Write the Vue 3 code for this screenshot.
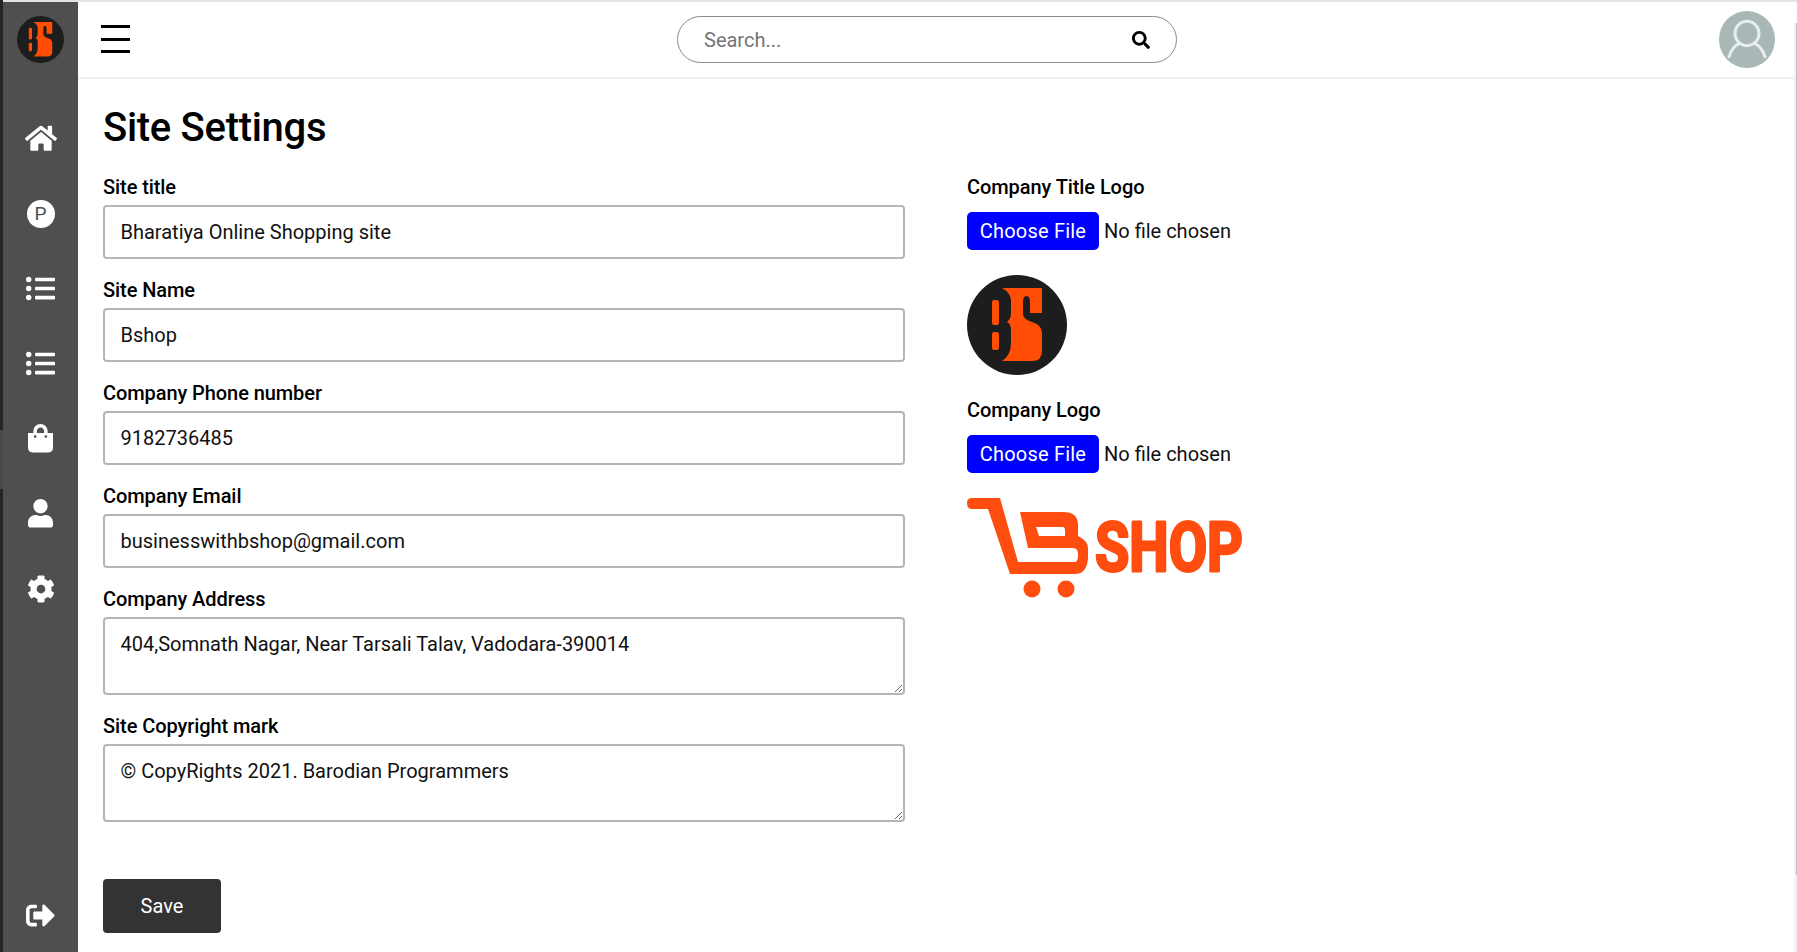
<script setup>
const navIcons = [
  { vb: '0 0 576 512', w: 32, d: 'M280.37 148.26L96 300.11V464a16 16 0 0 0 16 16l112.06-.29a16 16 0 0 0 15.92-16V368a16 16 0 0 1 16-16h64a16 16 0 0 1 16 16v95.64a16 16 0 0 0 16 16.05L464 480a16 16 0 0 0 16-16V300L295.67 148.26a12.19 12.19 0 0 0-15.3 0zM571.6 251.47L488 182.56V44.05a12 12 0 0 0-12-12h-56a12 12 0 0 0-12 12v72.61L318.47 43a48 48 0 0 0-61 0L4.34 251.47a12 12 0 0 0-1.6 16.9l25.5 31A12 12 0 0 0 45.15 301l235.22-193.74a12.19 12.19 0 0 1 15.3 0L530.9 301a12 12 0 0 0 16.9-1.6l25.5-31a12 12 0 0 0-1.7-16.93z' },
  { badge: 'P' },
  { vb: '0 0 512 512', w: 29, d: 'M48 48a48 48 0 1 0 48 48 48 48 0 0 0-48-48zm0 160a48 48 0 1 0 48 48 48 48 0 0 0-48-48zm0 160a48 48 0 1 0 48 48 48 48 0 0 0-48-48zm448 16H176a16 16 0 0 0-16 16v32a16 16 0 0 0 16 16h320a16 16 0 0 0 16-16v-32a16 16 0 0 0-16-16zm0-320H176a16 16 0 0 0-16 16v32a16 16 0 0 0 16 16h320a16 16 0 0 0 16-16V80a16 16 0 0 0-16-16zm0 160H176a16 16 0 0 0-16 16v32a16 16 0 0 0 16 16h320a16 16 0 0 0 16-16v-32a16 16 0 0 0-16-16z' },
  { vb: '0 0 512 512', w: 29, d: 'M48 48a48 48 0 1 0 48 48 48 48 0 0 0-48-48zm0 160a48 48 0 1 0 48 48 48 48 0 0 0-48-48zm0 160a48 48 0 1 0 48 48 48 48 0 0 0-48-48zm448 16H176a16 16 0 0 0-16 16v32a16 16 0 0 0 16 16h320a16 16 0 0 0 16-16v-32a16 16 0 0 0-16-16zm0-320H176a16 16 0 0 0-16 16v32a16 16 0 0 0 16 16h320a16 16 0 0 0 16-16V80a16 16 0 0 0-16-16zm0 160H176a16 16 0 0 0-16 16v32a16 16 0 0 0 16 16h320a16 16 0 0 0 16-16v-32a16 16 0 0 0-16-16z' },
  { vb: '0 0 448 512', w: 25, d: 'M352 160v-32C352 57.42 294.579 0 224 0 153.42 0 96 57.42 96 128v32H0v272c0 44.183 35.817 80 80 80h288c44.183 0 80-35.817 80-80V160h-96zm-192-32c0-35.29 28.71-64 64-64s64 28.71 64 64v32H160v-32zm160 120c-13.255 0-24-10.745-24-24s10.745-24 24-24 24 10.745 24 24-10.745 24-24 24zm-192 0c-13.255 0-24-10.745-24-24s10.745-24 24-24 24 10.745 24 24-10.745 24-24 24z' },
  { vb: '0 0 448 512', w: 25, d: 'M224 256c70.7 0 128-57.3 128-128S294.7 0 224 0 96 57.3 96 128s57.3 128 128 128zm89.6 32h-16.7c-22.2 10.2-46.9 16-72.9 16s-50.6-5.8-72.9-16h-16.7C60.2 288 0 348.2 0 422.4V464c0 26.5 21.5 48 48 48h352c26.5 0 48-21.5 48-48v-41.6c0-74.2-60.2-134.4-134.4-134.4z' },
  { vb: '0 0 512 512', w: 28, d: 'M487.4 315.7l-42.6-24.6c4.3-23.2 4.3-47 0-70.2l42.6-24.6c4.9-2.8 7.1-8.6 5.5-14-11.1-35.6-30-67.8-54.7-94.6-3.8-4.1-10-5.1-14.8-2.3L380.8 110c-17.9-15.4-38.5-27.3-60.8-35.1V25.8c0-5.6-3.9-10.5-9.4-11.7-36.7-8.2-74.3-7.8-109.2 0-5.5 1.2-9.4 6.1-9.4 11.7V75c-22.2 7.9-42.8 19.8-60.8 35.1L88.7 85.5c-4.9-2.8-11-1.9-14.8 2.3-24.7 26.7-43.6 58.9-54.7 94.6-1.7 5.4.6 11.2 5.5 14L67.3 221c-4.3 23.2-4.3 47 0 70.2l-42.6 24.6c-4.9 2.8-7.1 8.6-5.5 14 11.1 35.6 30 67.8 54.7 94.6 3.8 4.1 10 5.1 14.8 2.3l42.6-24.6c17.9 15.4 38.5 27.3 60.8 35.1v49.2c0 5.6 3.9 10.5 9.4 11.7 36.7 8.2 74.3 7.8 109.2 0 5.5-1.2 9.4-6.1 9.4-11.7v-49.2c22.2-7.9 42.8-19.8 60.8-35.1l42.6 24.6c4.9 2.8 11 1.9 14.8-2.3 24.7-26.7 43.6-58.9 54.7-94.6 1.5-5.5-.7-11.3-5.6-14.1zM256 336c-44.1 0-80-35.9-80-80s35.9-80 80-80 80 35.9 80 80-35.9 80-80 80z' }
]
const logout = 'M497 273L329 441c-15 15-41 4.5-41-17v-96H152c-13.3 0-24-10.7-24-24v-96c0-13.3 10.7-24 24-24h136V88c0-21.4 25.9-32 41-17l168 168c9.3 9.4 9.3 24.6 0 34zM192 436v-40c0-6.6-5.4-12-12-12H96c-17.7 0-32-14.3-32-32V160c0-17.7 14.3-32 32-32h84c6.6 0 12-5.4 12-12V76c0-6.6-5.4-12-12-12H96c-53 0-96 43-96 96v192c0 53 43 96 96 96h84c6.6 0 12-5.4 12-12z'
const search = 'M505 442.7L405.3 343c-4.5-4.5-10.6-7-17-7H372c27.6-35.3 44-79.7 44-128C416 93.1 322.9 0 208 0S0 93.1 0 208s93.1 208 208 208c48.3 0 92.7-16.4 128-44v16.3c0 6.4 2.5 12.5 7 17l99.7 99.7c9.4 9.4 24.6 9.4 33.9 0l28.3-28.3c9.4-9.4 9.4-24.6.1-34zM208 336c-70.7 0-128-57.2-128-128 0-70.7 57.2-128 128-128 70.7 0 128 57.2 128 128 0 70.7-57.2 128-128 128z'
const bsMark = 'M27 25h3q2 0 2 3v19q0 3-2 3h-3q-2 0-2-3V28q0-3 2-3zM27 57h3q2 0 2 3v12q0 3-2 3h-3q-2 0-2-3V60q0-3 2-3zM35 13H75V38H63V27Q63 21 59.500 21T56 27V39Q56 44 65 47Q75 50 75 58V76Q75 86 65 86H35Q44 80 44 68V55Q44 49 40 47Q44 44 44 38V26Q44 18 35 13Z'
const fields = [
  { label: 'Site title', value: 'Bharatiya Online Shopping site' },
  { label: 'Site Name', value: 'Bshop' },
  { label: 'Company Phone number', value: '9182736485' },
  { label: 'Company Email', value: 'businesswithbshop@gmail.com' }
]
const areas = [
  { label: 'Company Address', value: '404,Somnath Nagar, Near Tarsali Talav, Vadodara-390014' },
  { label: 'Site Copyright mark', value: '© CopyRights 2021. Barodian Programmers' }
]
</script>

<template>
  <div class="page">
    <aside class="sidebar">
      <div class="edge"></div>
      <div class="rail">
        <div class="brand">
          <svg class="brand-mark" viewBox="0 0 100 100"><circle cx="50" cy="50" r="50" fill="#1d1d1d"/><path :d="bsMark" fill="#ff4d06"/></svg>
        </div>
        <nav class="nav">
          <a v-for="(icon, i) in navIcons" :key="i" class="nav-item">
            <span v-if="icon.badge" class="badge">{{ icon.badge }}</span>
            <svg v-else :viewBox="icon.vb" :width="icon.w" fill="#fff"><path :d="icon.d"/></svg>
          </a>
        </nav>
        <a class="nav-item logout">
          <svg viewBox="0 0 512 512" width="29" fill="#fff"><path :d="logout"/></svg>
        </a>
      </div>
    </aside>

    <div class="main">
      <header class="topbar">
        <button class="burger" aria-label="Menu"><span></span><span></span><span></span></button>
        <div class="search">
          <input type="text" placeholder="Search..." />
          <svg viewBox="0 0 512 512" width="18" fill="#000"><path :d="search"/></svg>
        </div>
        <div class="avatar">
          <svg viewBox="0 0 56 56" width="56" height="57" preserveAspectRatio="none"><circle cx="28" cy="28" r="28" fill="#a9b8b6"/><circle cx="28" cy="22" r="12" fill="none" stroke="#e8eeed" stroke-width="3"/><path d="M10 45Q13 35 20 32M46 45Q43 35 36 32" fill="none" stroke="#e8eeed" stroke-width="3" stroke-linecap="round"/></svg>
        </div>
      </header>

      <main class="content">
        <h1>Site Settings</h1>
        <div class="columns">
          <form class="form" @submit.prevent>
            <div v-for="f in fields" :key="f.label" class="group">
              <label>{{ f.label }}</label>
              <input class="control" type="text" :value="f.value" />
            </div>
            <div v-for="f in areas" :key="f.label" class="group">
              <label>{{ f.label }}</label>
              <textarea class="control area" :value="f.value"></textarea>
            </div>
            <button class="save" type="submit">Save</button>
          </form>

          <div class="side">
            <label>Company Title Logo</label>
            <input class="file" type="file" />
            <svg class="logo-round" viewBox="0 0 100 100" width="100" height="100"><circle cx="50" cy="50" r="50" fill="#1d1d1d"/><path :d="bsMark" fill="#ff4d06"/></svg>
            <label>Company Logo</label>
            <input class="file" type="file" />
            <svg class="logo-wide" viewBox="0 0 330 100" width="330" height="100">
              <path fill="#ff4d0f" fill-rule="evenodd" d="M5 0H33L51 64H108Q111 64 111 56Q111 50 106 50H61L53 14H96Q111 14 111 27V38Q121 43 121 50V60Q120 76 108 76H43L21 11H5Q0 11 0 5Q0 0 5 0ZM69 29H96Q98 29 98 33V38H72Z"/>
              <circle cx="65" cy="91" r="8.500" fill="#ff4d0f"/><circle cx="99" cy="91" r="8.500" fill="#ff4d0f"/>
              <text x="128" y="73" class="shop" textLength="148" lengthAdjust="spacingAndGlyphs">SHOP</text>
            </svg>
          </div>
        </div>
      </main>
    </div>
    <div class="scroll-track"><div class="scroll-thumb"></div></div>
  </div>
</template>

<style>
html, body { margin: 0; background: #fff; }
</style>

<style scoped>
* { box-sizing: border-box; }
.page { position: relative; display: flex; width: 1797px; height: 952px; overflow: hidden; font-family: Roboto, "Liberation Sans", sans-serif; color: #000; background: #fff; }
.scroll-track { position: absolute; top: 23px; bottom: 0; right: 0; width: 3px; background: #f1f1f1; display: flex; justify-content: flex-end; }
.scroll-thumb { width: 1px; height: 852px; background: #c1c1c1; }
.sidebar { display: flex; width: 78px; flex: none; }
.edge { width: 3px; background: linear-gradient(to bottom, #252525 430px, #4a4747 430px, #4a4747 489px, #252525 489px); }
.rail { flex: 1; display: flex; flex-direction: column; align-items: center; background: #4f4f4f; border-top: 2px solid #e4e4e4; }
.brand { height: 75px; display: flex; align-items: center; justify-content: center; }
.brand-mark { width: 47px; height: 47px; }
.nav { margin-top: 24px; display: flex; flex-direction: column; }
.nav-item { height: 75px; display: flex; align-items: center; justify-content: center; }
.badge { width: 28px; height: 28px; border-radius: 50%; background: #fff; color: #4f4f4f; display: flex; align-items: center; justify-content: center; font: 400 19px/1 Roboto, sans-serif; }
.logout { margin-top: auto; margin-bottom: -1px; }
.main { flex: 1; display: flex; flex-direction: column; min-width: 0; border-top: 2px solid #e4e4e4; }
.topbar { height: 77px; flex: none; display: flex; align-items: center; border-bottom: 2px solid #f0f0f0; }
.burger { margin: 0 0 1px 23px; width: 29px; height: 28px; padding: 0; border: 0; background: none; display: flex; flex-direction: column; justify-content: space-between; }
.burger span { display: block; height: 3px; background: #000; }
.search { margin-left: 547px; width: 500px; height: 47px; border: 1px solid #8a8a8a; border-radius: 24px; display: flex; align-items: center; padding: 0 26px; }
.search input { flex: 1; min-width: 0; border: 0; outline: 0; padding: 0; font: 400 20px Roboto, sans-serif; color: #333; background: none; }
.search input::placeholder { color: #757575; opacity: 1; }
.avatar { margin-left: auto; margin-right: 22px; display: flex; }
.content { flex: 1; padding: 24px 0 0 25px; }
h1 { margin: 1px 0 23px; font-size: 40px; line-height: 48px; font-weight: 500; letter-spacing: -0.3px; }
.columns { display: flex; gap: 62px; }
.form { width: 802px; flex: none; display: flex; flex-direction: column; }
label { display: block; font-size: 20px; line-height: 24px; font-weight: 500; letter-spacing: -0.08px; }
.group { margin-bottom: 19px; }
.group label { margin-bottom: 6px; }
.control { display: block; width: 100%; height: 54px; padding: 0 15px 0 16px; border: 2px solid #b5b5b5; border-radius: 4px; font: 400 20px/24px Roboto, sans-serif; color: #111; background: #fff; outline: 0; text-indent: -0.5px; }
.area { height: 78px; padding: 13px 16px; }
.save { margin-top: 38px; width: 118px; height: 54px; border: 0; border-radius: 4px; background: #333; color: #fff; font: 400 20px Roboto, sans-serif; }
.side { display: flex; flex-direction: column; align-items: flex-start; }
.file { display: block; margin-top: 13px; font: 400 20px Roboto, sans-serif; color: #111; }
.file::file-selector-button { width: 132px; height: 38px; margin-right: 5px; padding: 0; border: 0; border-radius: 5px; background: #00f; color: #fff; font: 400 20px Roboto, sans-serif; letter-spacing: 0.2px; }
.logo-round { margin: 25px 0 23px; }
.logo-wide { margin-top: 25px; }
.shop { font-family: Roboto, sans-serif; font-size: 68px; font-weight: 700; fill: #ff4d0f; stroke: #ff4d0f; stroke-width: 3px; stroke-linejoin: round; }
</style>
